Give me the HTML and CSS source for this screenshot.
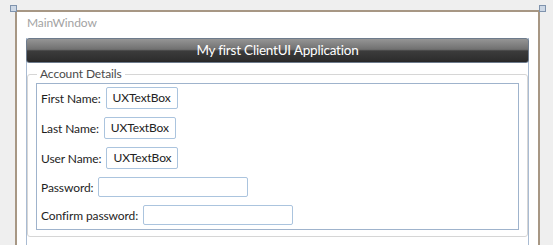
FILE: index.html
```html
<!DOCTYPE html>
<html lang="en">
<head>
  <meta charset="UTF-8" />
  <title>MainWindow</title>
  <link rel="stylesheet" href="styles.css">
</head>
<body>
  <span class="handle handle-left"></span>
  <span class="handle handle-right"></span>

  <div class="window">
    <div class="window-title">MainWindow</div>

    <div class="content">
      <div class="header-bar">My first ClientUI Application</div>

      <fieldset class="group">
        <legend>Account Details</legend>
        <div class="form">
          <div class="row">
            <label>First Name:</label>
            <div class="textbox">UXTextBox</div>
          </div>
          <div class="row">
            <label>Last Name:</label>
            <div class="textbox">UXTextBox</div>
          </div>
          <div class="row">
            <label>User Name:</label>
            <div class="textbox">UXTextBox</div>
          </div>
          <div class="row">
            <label>Password:</label>
            <div class="textbox empty"></div>
          </div>
          <div class="row">
            <label>Confirm password:</label>
            <div class="textbox empty"></div>
          </div>
        </div>
      </fieldset>
    </div>
  </div>
</body>
</html>
```

FILE: styles.css
```css
* {
  margin: 0;
  padding: 0;
  box-sizing: border-box;
}
body {
  font-family: 'Lato', sans-serif;
  font-size: 12px;
  letter-spacing: -0.1px;
  background: #efefef;
  color: #1e1e1e;
  overflow: hidden;
  height: 245px;
  padding: 10px 0 0 15px;
}
.handle {
  position: absolute;
  top: 5px;
  width: 7px;
  height: 7px;
  background: #cdd8e6;
  border: 1px solid #7f93ad;
}
.handle-left {
  left: 10px;
}
.handle-right {
  left: 539px;
}
.window {
  width: 525px;
  height: 240px;
  background: #fff;
  border: 2px solid #a79784;
  border-bottom: none;
}
.window-title {
  height: 26px;
  padding: 3px 0 0 10px;
  color: #a3a3a3;
  font-size: 12px;
}
.content {
  margin: 0 9px;
  height: 210px;
  border-left: 1px solid #a9bbd2;
  border-right: 1px solid #a9bbd2;
}
.header-bar {
  height: 25px;
  margin: 0 -1px;
  border: 1px solid #6d7b8c;
  border-radius: 3px;
  background: linear-gradient(#959595 0%, #707070 45%, #3c3c3c 52%, #2f2f2f 90%, #262626 100%);
  color: #fff;
  font-size: 13.5px;
  letter-spacing: -0.2px;
  line-height: 22px;
  text-align: center;
}
.group {
  margin-top: 3px;
  border: 1px solid #d6d6d6;
  border-radius: 3px;
  padding: 0 8px 6px;
}
.group legend {
  margin-left: 1px;
  padding: 0 3px;
  color: #4a4a4a;
  font-size: 12px;
  line-height: 16px;
}
.form {
  margin-top: 1px;
  border: 1px solid #9fb3cc;
  padding: 3px 4px 4px;
  display: flex;
  flex-direction: column;
  gap: 8px;
}
.row {
  display: flex;
  align-items: center;
  gap: 5px;
}
.textbox {
  height: 22px;
  padding: 0 6px;
  border: 1px solid #abc4de;
  border-radius: 2px;
  line-height: 20px;
  color: #222;
}
.textbox.empty {
  height: 20px;
  width: 150px;
}
```
